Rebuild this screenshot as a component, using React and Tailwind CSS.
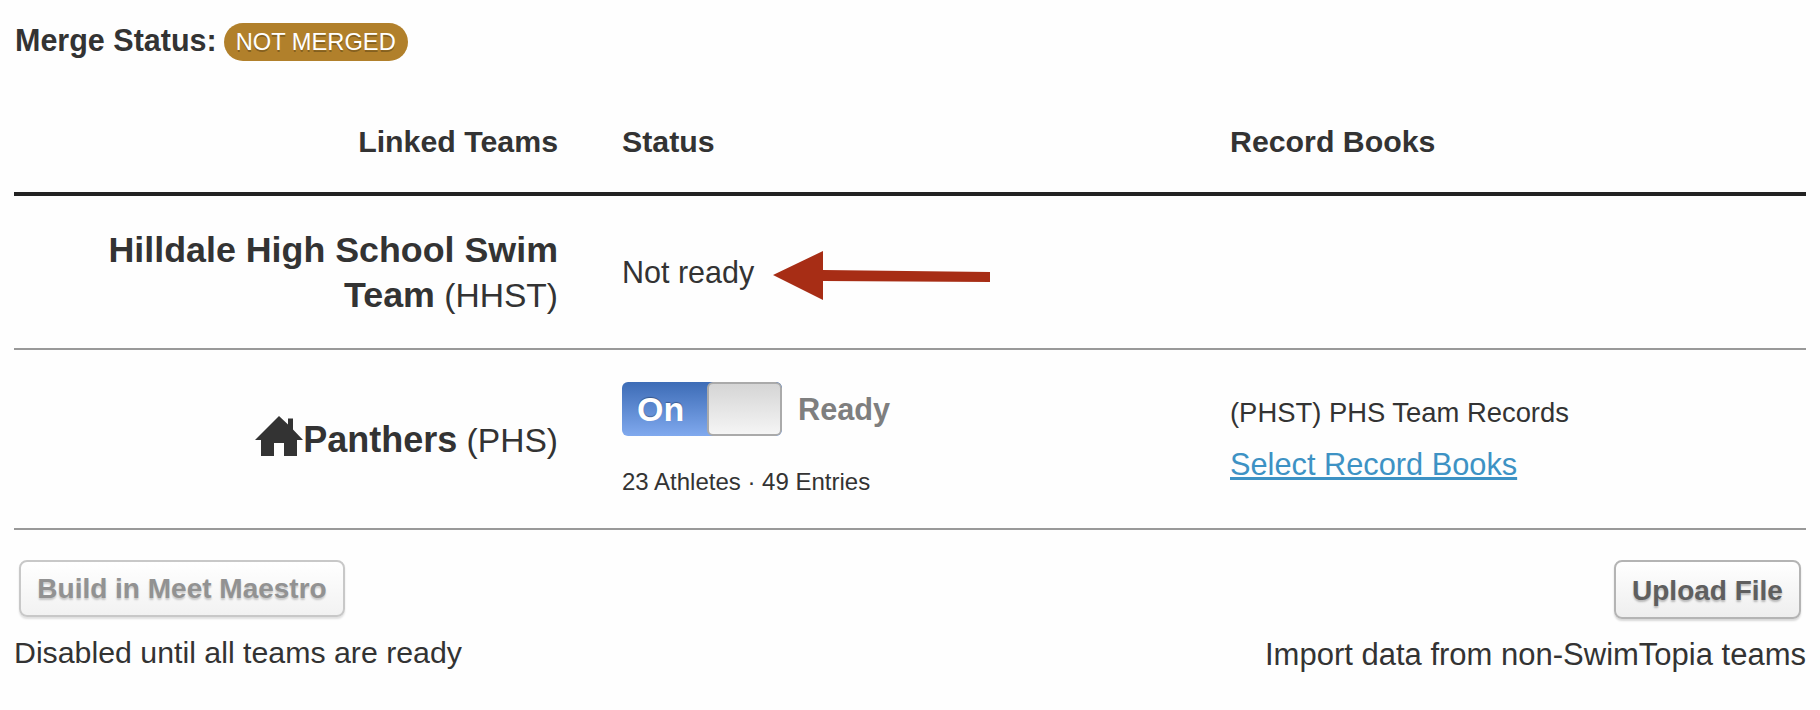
const HomeIcon = () => (
  <svg width="48" height="40" viewBox="0 0 48 40" className="shrink-0 mt-[-2px]">
    <path d="M24 0 L33 8.5 V2.5 H38 V13.5 L48 24 H42 V40 H29 V27 H19 V40 H6 V24 H0 Z" fill="#333333" />
  </svg>
);

const Arrow = () => (
  <svg width="217" height="49" viewBox="0 0 217 49" className="shrink-0 mt-px">
    <path d="M0 24 L50 0 V19 L217 21 V31 L50 30 V49 Z" fill="#a72d15" />
  </svg>
);

const Toggle = () => (
  <div className="relative w-[160px] h-[54px] rounded-[6px] overflow-hidden bg-gradient-to-b from-[#3d6cb6] to-[#80a9ee]">
    <span className="absolute left-[15px] top-[8px] text-[34px] leading-[38px] font-bold text-white [text-shadow:0_-1px_1px_rgba(0,0,0,0.3)]">On</span>
    <div className="absolute right-0 top-0 w-[75px] h-[54px] rounded-[6px] border-2 border-[#aaaaaa] bg-gradient-to-b from-[#d5d5d5] to-[#f5f5f5]" />
  </div>
);

const App = () => {
  return (
    <div className="w-[1820px] h-[710px] px-[14px] bg-[#fefefe] text-[#333333] overflow-hidden font-['Liberation_Sans',Arial,sans-serif]">
      <div className="flex items-center h-[38px] mt-[23px]">
        <span className="text-[30.5px] leading-[38px] font-bold ml-px mb-[4px]">Merge Status:</span>
        <span className="ml-[7px] w-[184px] h-[38px] rounded-full bg-[#b1802b] text-white text-[23.7px] leading-[38px] text-center [text-shadow:0_2px_0_rgba(0,0,0,0.25)]">
          NOT MERGED
        </span>
      </div>

      <div className="grid grid-cols-[544px_544px_1fr] gap-x-16 h-[135px] pt-[60px] border-b-4 border-[#222222] text-[30.3px] leading-[42px] font-bold">
        <div className="text-right">Linked Teams</div>
        <div>Status</div>
        <div>Record Books</div>
      </div>

      <div className="grid grid-cols-[544px_544px_1fr] gap-x-16 h-[154px] border-b-2 border-[#999999]">
        <div className="text-right text-[33.6px] leading-[44px] pt-[32px]">
          <strong className="text-[35.8px]">Hilldale High School Swim Team</strong> (HHST)
        </div>
        <div className="flex items-start gap-[19px] pt-[54px] text-[30.5px] leading-[44px]">
          <span>Not ready</span>
          <Arrow />
        </div>
        <div />
      </div>

      <div className="grid grid-cols-[544px_544px_1fr] gap-x-16 h-[180px] border-b-2 border-[#999999]">
        <div className="flex justify-end items-start pt-[68px] text-[33.6px] leading-[44px]">
          <HomeIcon />
          <span className="whitespace-pre"><strong className="text-[36px]">Panthers</strong> (PHS)</span>
        </div>
        <div className="pt-[32px]">
          <div className="flex items-center gap-[16px]">
            <Toggle />
            <span className="text-[30.7px] leading-[38px] font-bold text-[#7f7f7f] mt-[2px]">Ready</span>
          </div>
          <div className="mt-[31px] text-[24px] leading-[30px]">23 Athletes · 49 Entries</div>
        </div>
        <div className="pt-[46px]">
          <div className="text-[27.4px] leading-[34px]">(PHST) PHS Team Records</div>
          <a href="#" className="block mt-[17px] text-[30.75px] leading-[36px] text-[#3d92c4] underline">Select Record Books</a>
        </div>
      </div>

      <div className="flex justify-between pt-[30px]">
        <div>
          <button className="block ml-[5px] w-[326px] h-[57px] rounded-[8px] border-2 border-[#c8c8c8] bg-gradient-to-b from-white to-[#f2f2f2] shadow-[0_2px_2px_rgba(0,0,0,0.12)] text-[28px] font-bold text-[#929292] [text-shadow:0_2px_2px_rgba(0,0,0,0.2)]">
            Build in Meet Maestro
          </button>
          <p className="mt-[16px] text-[30.3px] leading-[40px]">Disabled until all teams are ready</p>
        </div>
        <div className="flex flex-col items-end">
          <button className="mr-[5px] w-[187px] h-[59px] pt-[2px] rounded-[8px] border-2 border-[#b4b4b4] bg-gradient-to-b from-white to-[#eeeeee] shadow-[0_2px_2px_rgba(0,0,0,0.15)] text-[28px] font-bold text-[#5f5f5f] [text-shadow:0_2px_2px_rgba(0,0,0,0.25)]">
            Upload File
          </button>
          <p className="mt-[16px] text-[31px] leading-[40px]">Import data from non-SwimTopia teams</p>
        </div>
      </div>
    </div>
  );
};

export default App;
